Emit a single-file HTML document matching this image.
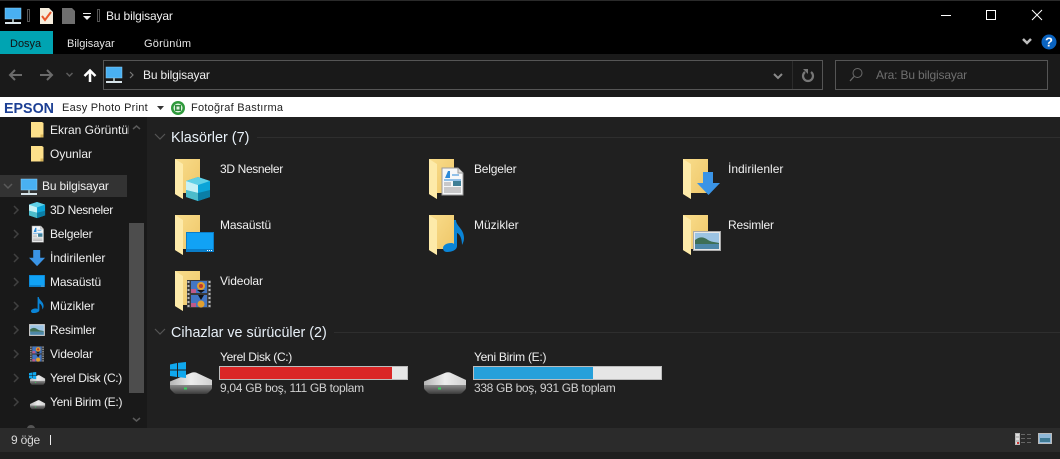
<!DOCTYPE html>
<html lang="tr"><head><meta charset="utf-8"><title>Bu bilgisayar</title>
<style>
html,body{margin:0;padding:0;width:1060px;height:459px;overflow:hidden;background:#202020}
body{position:relative;font-family:"Liberation Sans",sans-serif;font-size:12px;color:#f0f0f0}
.b{position:absolute}
.t{position:absolute;white-space:nowrap;line-height:16px;height:16px;transform:translateY(-8px)}
svg{position:absolute;left:0;top:0}
</style></head><body>
<div class="b" style="left:0;top:0;width:1060px;height:54px;background:#000"></div>
<div class="b" style="left:0;top:0;width:1060px;height:1px;background:#2a2a2a"></div>
<div class="b" style="left:0;top:31px;width:53px;height:23px;background:#00a4b2"></div>
<div class="b" style="left:0;top:54px;width:1060px;height:43px;background:#1a1a1a"></div>
<div class="b" style="left:103px;top:60px;width:718px;height:28px;border:1px solid #555;background:#191919"></div>
<div class="b" style="left:792px;top:61px;width:1px;height:28px;background:#2c2c2c"></div>
<div class="b" style="left:835px;top:60px;width:211px;height:28px;border:1px solid #555;background:#191919"></div>
<div class="b" style="left:0;top:97px;width:1060px;height:20px;background:#fff"></div>
<div class="b" style="left:0;top:117px;width:147px;height:311px;background:#191919"></div>
<div class="b" style="left:0;top:175px;width:127px;height:22px;background:#333"></div>
<div class="b" style="left:129px;top:223px;width:15px;height:170px;background:#4d4d4d"></div>
<div class="b" style="left:0;top:428px;width:1060px;height:24px;background:#2b2b2b"></div>
<div class="b" style="left:0;top:452px;width:1060px;height:7px;background:#1f1f1f"></div>
<div class="b" style="left:257px;top:137px;width:803px;height:1px;background:#2e2e2e"></div>
<div class="b" style="left:334px;top:332px;width:726px;height:1px;background:#2e2e2e"></div>
<div class="b" style="left:219px;top:366px;width:187px;height:12px;border:1px solid #bcbcbc;background:#e6e6e6"></div>
<div class="b" style="left:220px;top:367px;width:172px;height:12px;background:#da2626"></div>
<div class="b" style="left:473px;top:366px;width:187px;height:12px;border:1px solid #bcbcbc;background:#e6e6e6"></div>
<div class="b" style="left:474px;top:367px;width:119px;height:12px;background:#26a0da"></div>

<svg width="1060" height="459" viewBox="0 0 1060 459">
<defs>
<linearGradient id="gb" x1="0" y1="0" x2="1" y2="1"><stop offset="0" stop-color="#f9dd8c"/><stop offset="1" stop-color="#eec566"/></linearGradient>
<linearGradient id="gt" x1="0" y1="0" x2="1" y2="0"><stop offset="0" stop-color="#b5b5b5"/><stop offset=".5" stop-color="#ececec"/><stop offset="1" stop-color="#d0d0d0"/></linearGradient>
<linearGradient id="gf" x1="0" y1="0" x2="0" y2="1"><stop offset="0" stop-color="#8c8c8c"/><stop offset="1" stop-color="#3a3a3a"/></linearGradient>
<symbol id="fold" overflow="visible"><path d="M0 0H25V34H8V40L0 35Z" fill="url(#gb)"/><path d="M0 0L8 5V40L0 35Z" fill="#fdeaa9"/></symbol>
<symbol id="pc" overflow="visible"><rect x="0" y="0" width="16" height="11" fill="#49b0f2"/><rect x="0" y="0" width="16" height="11" fill="none" stroke="#8fd0f7" stroke-width=".5"/><rect x="7" y="11" width="2" height="3" fill="#9aa"/><rect x="0" y="14" width="16" height="2" fill="#d8e4ea"/></symbol>
<symbol id="sfold" overflow="visible"><path d="M0 0H11L12.500 1V15.500H0Z" fill="#fde08a"/><path d="M9.500 12.500H12.500V15.500H9.500Z" fill="#d9b65c"/></symbol>
<symbol id="cube" overflow="visible"><path d="M12 0L24 4V20L12 24L0 20V4Z" fill="#0ba4d8"/><path d="M12 0L24 4L12 8L0 4Z" fill="#5fd0e6"/><path d="M0 4L12 8V16L0 13Z" fill="#c6f1f5"/><path d="M0 13L12 16V24L0 20Z" fill="#4cbccb"/><path d="M12 16L24 13V20L12 24Z" fill="#0b7ea6"/></symbol>
<symbol id="doc" overflow="visible"><path d="M0 0H16L21 5V27H0Z" fill="#f5f7f8" stroke="#9a9a9a"/><path d="M16 0V5H21" fill="#ddd" stroke="#999"/><path d="M3 10L6 3H8V10Z" fill="#2c8ad8"/><path d="M10 7H17M2 12H19" stroke="#2c8ad8"/><rect x="11" y="13" width="8" height="5" fill="#3f7f96"/><path d="M2 15H9M2 17H9M2 20H19M2 22H19M2 24H19" stroke="#9a9a9a"/></symbol>
<symbol id="arrow" overflow="visible"><path d="M6 0H16V11H23L11.500 23L0 11H6Z" fill="#3a94e6"/></symbol>
<symbol id="desk" overflow="visible"><rect x="0" y="0" width="28" height="20" fill="#0a7dc8"/><rect x="1" y="1" width="26" height="16" fill="#11a2f5"/><path d="M21 18.500H27" stroke="#fff" stroke-dasharray="1 1"/></symbol>
<symbol id="note" overflow="visible"><path d="M11 0H13C13 6 21 9 21 18C21 21 20 23 19 25C19 19 17 14 14 13V26C14 30 9 32 4 32C1 32 0 30 0 28C0 25 4 23 8 23C9 23 10 23 11 24Z" fill="#0a84d6"/></symbol>
<symbol id="pic" overflow="visible"><rect x=".5" y=".5" width="27" height="19" fill="#e8e8e8" stroke="#aaa"/><rect x="2" y="2" width="24" height="16" fill="#9cc4e4"/><path d="M2 9C7 5 11 6 15 9C18 11 22 11 26 12V13H2Z" fill="#3e6f55"/><rect x="2" y="13" width="24" height="5" fill="#4d87a8"/></symbol>
<symbol id="vid" overflow="visible"><rect x="0" y="0" width="24" height="28" fill="#3a3a3a"/><path d="M1.500 1V28M22.500 1V28" stroke="#bbb" stroke-width="2" stroke-dasharray="2 2"/><rect x="4" y="1" width="16" height="12" fill="#4376c4"/><rect x="4" y="15" width="16" height="12" fill="#4376c4"/><circle cx="14" cy="6" r="4" fill="#e0a030"/><circle cx="14" cy="6" r="2" fill="#c0392b"/><circle cx="14" cy="24" r="3.500" fill="#e0a030"/><path d="M4 9H9V13H4ZM4 23H9V27H4Z" fill="#c05a8a"/><path d="M10 10H18L14 13ZM11 15H17L14 20Z" fill="#111"/></symbol>
<symbol id="drv" overflow="visible"><path d="M0 9.500L22 .5Q24 0 26 .5L42 8V13.500H0Z" fill="url(#gt)"/><path d="M0 13H42V16Q42 17 41 18L38 21Q37 22 35 22H7Q5 22 4 21L1 18Q0 17 0 16Z" fill="url(#gf)"/><rect x="14" y="15.500" width="3" height="2" fill="#35d05a"/></symbol>
<symbol id="win" overflow="visible"><path d="M0 2.500L7 1V7.500H0ZM8 .9L16 0V7.500H8ZM0 8.500H7V15L0 14ZM8 8.500H16V16L8 15Z" fill="#10a8ee"/></symbol>
<symbol id="chev" overflow="visible"><path d="M0 0L4 4L0 8" fill="none" stroke="#414141" stroke-width="1.500"/></symbol>
</defs>

<!-- title bar icons -->
<use href="#pc" x="5" y="8"/>
<rect x="27.500" y="9.500" width="2" height="12" fill="none" stroke="#555" stroke-width="1"/>
<path d="M40 8H49L53 12V24H40Z" fill="#f5ecdc"/><path d="M42 16L45 20L51 12" fill="none" stroke="#e8562a" stroke-width="2"/>
<path d="M62 8H72L75 11V24H62Z" fill="#6f6f6f"/>
<path d="M83 13.500H91" stroke="#eee"/><path d="M83 16H91L87 20Z" fill="#eee"/>
<rect x="97.500" y="9.500" width="2" height="12" fill="none" stroke="#555" stroke-width="1"/>
<!-- window buttons -->
<path d="M941 15.500H951" stroke="#fff"/><rect x="986.500" y="10.500" width="9" height="9" fill="none" stroke="#fff"/><path d="M1032 10L1042 20M1042 10L1032 20" stroke="#fff"/>
<path d="M1023 39L1027 43L1031 39" fill="none" stroke="#bdbdbd" stroke-width="2.500"/>
<circle cx="1049" cy="42" r="7.500" fill="#0a63c0"/>
<!-- nav -->
<path d="M10 75H22M15 70L10 75L15 80" fill="none" stroke="#6b6b6b" stroke-width="2"/>
<path d="M40 75H52M47 70L52 75L47 80" fill="none" stroke="#6b6b6b" stroke-width="2"/>
<path d="M66.500 73L69.500 76L72.500 73" fill="none" stroke="#5c5c5c" stroke-width="1.500"/>
<path d="M90 82V71M84.500 76L90 70.500L95.500 76" fill="none" stroke="#fff" stroke-width="2.500"/>
<use href="#pc" x="106" y="67"/>
<path d="M130 72L133 75L130 78" fill="none" stroke="#777" stroke-width="1.200"/>
<path d="M774 74L778 78L782 74" fill="none" stroke="#8a8a8a" stroke-width="2"/>
<path d="M811 72A5 5 0 1 1 805 72" fill="none" stroke="#777" stroke-width="2.200"/><path d="M803 69L808 69L808 74Z" fill="#777"/>
<circle cx="857.500" cy="73" r="4.500" fill="none" stroke="#6a6a6a"/><path d="M854 76.500L850 81" stroke="#6a6a6a" stroke-width="1.300"/>
<!-- epson bar -->
<path d="M157 106H164L160.500 110Z" fill="#333"/>
<circle cx="178" cy="108" r="7" fill="#2f9a3c"/><circle cx="178" cy="108" r="4.500" fill="#dff2df"/><rect x="175" y="105" width="6" height="6" fill="#2f8a3c"/><rect x="176.500" y="106.500" width="3" height="3" fill="#dff2df"/>
<!-- sidebar icons -->
<use href="#sfold" x="31" y="122"/><use href="#sfold" x="31" y="146"/>
<path d="M133 129L136.500 126L140 129" fill="none" stroke="#5a5a5a" stroke-width="1.500"/>
<path d="M4 184L8 188L12 184" fill="none" stroke="#5a5a5a" stroke-width="1.500"/>
<use href="#pc" x="21" y="179"/>
<use href="#chev" x="14" y="206"/><use href="#chev" x="14" y="230"/><use href="#chev" x="14" y="254"/><use href="#chev" x="14" y="278"/><use href="#chev" x="14" y="302"/><use href="#chev" x="14" y="326"/><use href="#chev" x="14" y="350"/><use href="#chev" x="14" y="374"/><use href="#chev" x="14" y="398"/>
<g transform="translate(29,202) scale(.67)"><use href="#cube"/></g>
<g transform="translate(32,226) scale(.55,.6)"><use href="#doc"/></g>
<g transform="translate(29,250) scale(.7)"><use href="#arrow"/></g>
<g transform="translate(29,275) scale(.57,.6)"><use href="#desk"/></g>
<g transform="translate(31,297) scale(.6,.5)"><use href="#note"/></g>
<g transform="translate(29,324) scale(.57,.6)"><use href="#pic"/></g>
<g transform="translate(30,346) scale(.58,.57)"><use href="#vid"/></g>
<g transform="translate(30,375) scale(.36,.45)"><use href="#drv"/></g><g transform="translate(29,372) scale(.45)"><use href="#win"/></g>
<g transform="translate(30,400) scale(.36,.42)"><use href="#drv"/></g>
<path d="M133 418L136.500 421L140 418" fill="none" stroke="#5a5a5a" stroke-width="1.500"/>
<path d="M27 428Q28 425 31 425Q34 425 35 428Z" fill="#555"/>
<path d="M50.500 435V445" stroke="#eee"/>
<!-- section chevrons -->
<path d="M155 134L160 139L165 134" fill="none" stroke="#555" stroke-width="1.200"/>
<path d="M155 329L160 334L165 329" fill="none" stroke="#555" stroke-width="1.200"/>
<!-- folders -->
<use href="#fold" x="175" y="159"/><use href="#fold" x="429" y="159"/><use href="#fold" x="683" y="159"/>
<use href="#fold" x="175" y="215"/><use href="#fold" x="429" y="215"/><use href="#fold" x="683" y="215"/>
<use href="#fold" x="175" y="271"/>
<use href="#cube" x="186" y="177"/>
<use href="#doc" x="442" y="168"/>
<use href="#arrow" x="697" y="172"/>
<use href="#desk" x="186" y="232"/>
<use href="#note" x="443" y="220"/>
<use href="#pic" x="693" y="231"/>
<use href="#vid" x="187" y="280"/>
<!-- drives -->
<use href="#drv" x="170" y="372"/><use href="#win" x="170" y="362"/>
<use href="#drv" x="424" y="372"/>
<!-- status icons -->
<rect x="1015.500" y="433.500" width="4" height="3" fill="#ddd" stroke="#bbb"/><rect x="1015.500" y="437.500" width="4" height="3" fill="#ddd" stroke="#bbb"/><rect x="1015.500" y="441.500" width="4" height="3" fill="#ddd" stroke="#bbb"/>
<rect x="1017" y="442" width="2" height="2" fill="#c33"/>
<path d="M1021 434.500H1025M1027 434.500H1031M1021 438.500H1025M1027 438.500H1031M1021 442.500H1025M1027 442.500H1031" stroke="#666"/>
<rect x="1038.500" y="433.500" width="13" height="10" fill="#8fb8d8" stroke="#bbb"/><path d="M1040 438H1050V442H1040Z" fill="#3f7a94"/>
<!-- EPSON -->
<text x="4" y="113" font-family="Liberation Sans,sans-serif" font-size="15" font-weight="bold" fill="#1c3f94" textLength="50" lengthAdjust="spacingAndGlyphs">EPSON</text>
<text x="1049" y="46.500" text-anchor="middle" font-family="Liberation Sans,sans-serif" font-size="13" font-weight="bold" fill="#fff">?</text>
</svg>

<div class="t" style="left:106px;top:16px;letter-spacing:-.15px">Bu bilgisayar</div>
<div class="t" style="left:10px;top:44px;color:#111;font-size:11px">Dosya</div>
<div class="t" style="left:67px;top:44px;color:#e6e6e6;font-size:11px">Bilgisayar</div>
<div class="t" style="left:144px;top:44px;color:#e6e6e6;font-size:11px;letter-spacing:.2px">Görünüm</div>
<div class="t" style="left:143px;top:75px;letter-spacing:-.15px">Bu bilgisayar</div>
<div class="t" style="left:876px;top:75px;color:#6f6f6f;letter-spacing:-.17px">Ara: Bu bilgisayar</div>
<div class="t" style="left:62px;top:108px;color:#222;font-size:11px;letter-spacing:.25px">Easy Photo Print</div>
<div class="t" style="left:191px;top:108px;color:#222;font-size:11px;letter-spacing:.25px">Fotoğraf Bastırma</div>

<div class="t" style="left:50px;top:130px;width:79px;overflow:hidden">Ekran Görüntül</div>
<div class="t" style="left:50px;top:154px">Oyunlar</div>
<div class="t" style="left:42px;top:186px;letter-spacing:-.15px">Bu bilgisayar</div>
<div class="t" style="left:50px;top:210px;letter-spacing:-.35px">3D Nesneler</div>
<div class="t" style="left:50px;top:234px;letter-spacing:-.2px">Belgeler</div>
<div class="t" style="left:50px;top:258px">İndirilenler</div>
<div class="t" style="left:50px;top:282px;letter-spacing:-.12px">Masaüstü</div>
<div class="t" style="left:50px;top:306px">Müzikler</div>
<div class="t" style="left:50px;top:330px;letter-spacing:-.2px">Resimler</div>
<div class="t" style="left:50px;top:354px;letter-spacing:-.12px">Videolar</div>
<div class="t" style="left:50px;top:378px;letter-spacing:-.33px">Yerel Disk (C:)</div>
<div class="t" style="left:50px;top:402px;letter-spacing:-.27px">Yeni Birim (E:)</div>

<div class="t" style="left:171px;top:138px;font-size:14.400px;color:#e8f0f8">Klasörler (7)</div>
<div class="t" style="left:171px;top:333px;font-size:14.300px;color:#e8f0f8">Cihazlar ve sürücüler (2)</div>
<div class="t" style="left:220px;top:169px;letter-spacing:-.35px">3D Nesneler</div>
<div class="t" style="left:474px;top:169px;letter-spacing:-.2px">Belgeler</div>
<div class="t" style="left:728px;top:169px">İndirilenler</div>
<div class="t" style="left:220px;top:225px;letter-spacing:-.12px">Masaüstü</div>
<div class="t" style="left:474px;top:225px">Müzikler</div>
<div class="t" style="left:728px;top:225px;letter-spacing:-.2px">Resimler</div>
<div class="t" style="left:220px;top:281px;letter-spacing:-.12px">Videolar</div>
<div class="t" style="left:220px;top:357px;letter-spacing:-.33px">Yerel Disk (C:)</div>
<div class="t" style="left:220px;top:388px;color:#d0d0d0;letter-spacing:-.3px">9,04 GB boş, 111 GB toplam</div>
<div class="t" style="left:474px;top:357px;letter-spacing:-.27px">Yeni Birim (E:)</div>
<div class="t" style="left:474px;top:388px;color:#d0d0d0;letter-spacing:-.35px">338 GB boş, 931 GB toplam</div>
<div class="t" style="left:11px;top:440px;color:#d8d8d8;letter-spacing:-.2px">9 öğe</div>
</body></html>
